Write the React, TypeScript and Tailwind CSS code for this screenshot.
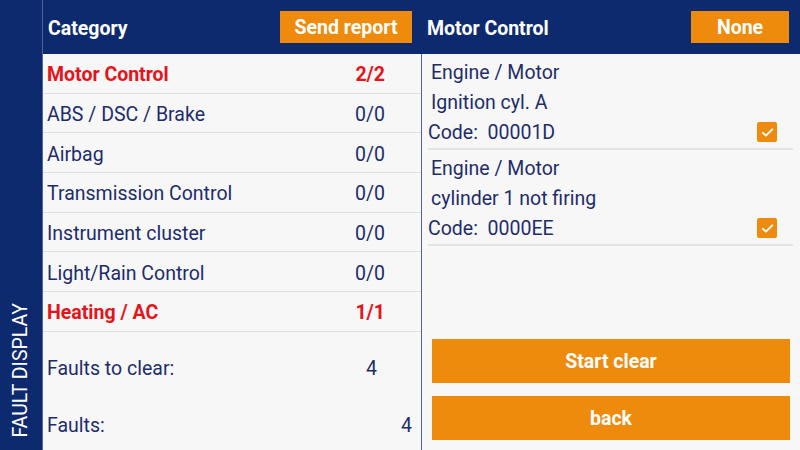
import React from 'react';

const categories = [
  { name: 'Motor Control', count: '2/2', active: true },
  { name: 'ABS / DSC / Brake', count: '0/0' },
  { name: 'Airbag', count: '0/0' },
  { name: 'Transmission Control', count: '0/0' },
  { name: 'Instrument cluster', count: '0/0' },
  { name: 'Light/Rain Control', count: '0/0' },
  { name: 'Heating / AC', count: '1/1', active: true },
];

const faults = [
  { group: 'Engine / Motor', text: 'Ignition cyl. A', code: '00001D' },
  { group: 'Engine / Motor', text: 'cylinder 1 not firing', code: '0000EE' },
];

const Check: React.FC = () => (
  <span className="w-[20px] h-[20px] rounded-[2px] bg-[#ee8a0c] flex items-center justify-center">
    <svg width="15" height="15" viewBox="0 0 24 24" fill="none" stroke="white" strokeWidth="3" strokeLinecap="round" strokeLinejoin="round">
      <path d="M4.5 12.5l5 4.5L19.5 7" />
    </svg>
  </span>
);

export default function App() {
  return (
    <div className="w-[800px] h-[450px] flex bg-[#f7f7f8] overflow-hidden text-[#1d2c6b] text-[19.5px]" style={{ fontFamily: 'Roboto, "Noto Sans", sans-serif' }}>
      {/* side strip */}
      <div className="w-[43px] h-full bg-[#0e2a6f] border-r border-[#53648f] flex flex-col justify-end items-center pb-[12px]">
        <span className="text-white text-[19.5px] [writing-mode:vertical-rl] rotate-180 leading-none">FAULT DISPLAY</span>
      </div>

      {/* categories */}
      <div className="w-[378px] flex flex-col">
        <div className="h-[54px] bg-[#0e2a6f] flex items-center justify-between pl-[5px] pr-[9px]">
          <span className="text-white font-bold pt-[4px]">Category</span>
          <button className="h-[32px] w-[132px] bg-[#ee8a0c] text-white font-bold pt-[2px]">Send report</button>
        </div>
        <div className="flex flex-col">
          {categories.map((c) => (
            <div key={c.name} className={`h-[39.7px] pt-[3px] flex items-center justify-between pl-[4px] pr-[36px] border-b border-[#dedfe3] ${c.active ? 'text-[#e5141b] font-bold' : ''}`}>
              <span>{c.name}</span>
              <span>{c.count}</span>
            </div>
          ))}
        </div>
        <div className="h-[70px] pt-[4px] flex items-center justify-between pl-[4px] pr-[44px]">
          <span>Faults to clear:</span>
          <span>4</span>
        </div>
        <div className="h-[45px] pt-[2px] flex items-center justify-between pl-[4px] pr-[9px]">
          <span>Faults:</span>
          <span>4</span>
        </div>
      </div>

      {/* fault list */}
      <div className="flex-1 flex flex-col">
        <div className="h-[54px] bg-[#0e2a6f] flex items-center justify-between pl-[6px] pr-[11px]">
          <span className="text-white font-bold pt-[4px]">Motor Control</span>
          <button className="h-[32px] w-[98px] bg-[#ee8a0c] text-white font-bold pt-[2px]">None</button>
        </div>
        <div className="flex-1 flex flex-col border-l border-[#53648f]">
          <div className="pl-[6px] pr-[7px]">
            {faults.map((f) => (
              <div key={f.code} className="h-[96px] pt-[3px] border-b-2 border-[#e3e4e7]">
                <div className="h-[30px] pt-[2px] flex items-center pl-[3px]">{f.group}</div>
                <div className="h-[30px] pt-[2px] flex items-center pl-[3px]">{f.text}</div>
                <div className="h-[30px] flex items-center justify-between pr-[16px]">
                  <span className="whitespace-pre pt-[2px]">{`Code:  ${f.code}`}</span>
                  <Check />
                </div>
              </div>
            ))}
          </div>
          <div className="mt-auto pl-[10px] pr-[10px] pb-[10px] flex flex-col gap-[13px]">
            <button className="h-[44px] w-full pt-[2px] bg-[#ee8a0c] text-white font-bold">Start clear</button>
            <button className="h-[44px] w-full pt-[2px] bg-[#ee8a0c] text-white font-bold">back</button>
          </div>
        </div>
      </div>
    </div>
  );
}
